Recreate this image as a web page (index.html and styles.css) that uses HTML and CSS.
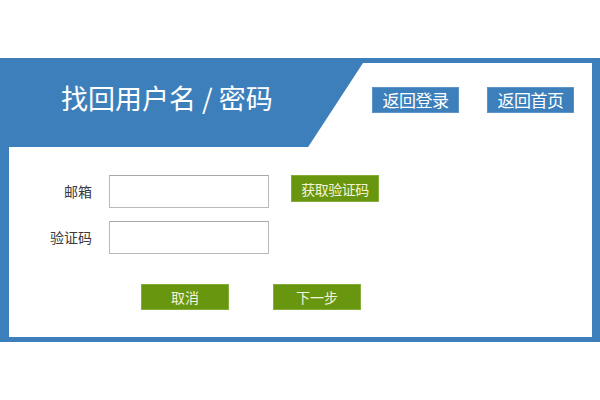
FILE: index.html
```html
<!DOCTYPE html>
<html lang="zh-CN">
<head>
    <meta charset="UTF-8">
    <meta name="viewport" content="width=device-width, initial-scale=1.0">
    <title>找回用户名 / 密码</title>
    <link rel="stylesheet" href="styles.css">
</head>
<body>
    <div class="frame">
        <div class="panel">
            <div class="panel-head">
                <div class="head-title">
                    <h1>找回用户名 / 密码</h1>
                </div>
                <div class="head-links">
                    <a class="head-link" href="#">返回登录</a>
                    <a class="head-link" href="#">返回首页</a>
                </div>
            </div>

            <form class="find-form">
                <div class="form-row">
                    <label class="form-label">邮箱</label>
                    <input class="form-input" type="text">
                    <button class="btn btn-code" type="button">获取验证码</button>
                </div>
                <div class="form-row">
                    <label class="form-label">验证码</label>
                    <input class="form-input" type="text">
                </div>
                <div class="form-actions">
                    <button class="btn btn-action" type="button">取消</button>
                    <button class="btn btn-action" type="submit">下一步</button>
                </div>
            </form>
        </div>
    </div>
</body>
</html>
```

FILE: styles.css
```css
* {
    margin: 0;
    padding: 0;
    box-sizing: border-box;
}

body {
    font-family: "Noto Sans CJK SC", "Noto Sans", sans-serif;
    background: #ffffff;
    color: #333333;
    padding-top: 58px;
}

.frame {
    background: #3d7fbb;
    padding: 5px 8px 5px 9px;
}

.panel {
    background: #ffffff;
    height: 274px;
}

.panel-head {
    display: flex;
    height: 84px;
}

.head-title {
    width: 354px;
    height: 84px;
    background: #3d7fbb;
    clip-path: polygon(0 0, 100% 0, 84.5% 100%, 0 100%);
    padding: 18px 0 0 52px;
}

.head-title h1 {
    font-size: 27px;
    font-weight: normal;
    color: #ffffff;
    line-height: 34px;
}

.head-links {
    display: flex;
    gap: 28px;
    padding: 24px 0 0 9px;
}

.head-link {
    display: block;
    width: 87px;
    height: 26px;
    background: #3d7fbb;
    border: 1px solid #5d94c6;
    color: #ffffff;
    text-decoration: none;
    text-align: center;
    font-size: 17px;
    line-height: 24px;
    letter-spacing: -0.5px;
}

.find-form {
    padding: 28px 0 0 40px;
}

.form-row {
    display: flex;
    align-items: flex-start;
    margin-bottom: 13px;
}

.form-label {
    width: 43px;
    text-align: right;
    font-size: 14px;
    line-height: 33px;
    color: #3a3a3a;
    margin-right: 17px;
}

.form-input {
    width: 160px;
    height: 33px;
    border: 1px solid #b9b9b9;
    border-top-color: #a8a8a8;
    background: #ffffff;
    outline: none;
}

.btn {
    font-family: inherit;
    background: #69960f;
    border: 1px solid #86ad3c;
    color: #f4f4dc;
    font-size: 14px;
    cursor: pointer;
}

.btn-code {
    width: 88px;
    height: 27px;
    margin-left: 22px;
    letter-spacing: -0.5px;
}

.form-actions {
    display: flex;
    gap: 44px;
    padding: 17px 0 0 92px;
}

.btn-action {
    width: 88px;
    height: 26px;
}
```
